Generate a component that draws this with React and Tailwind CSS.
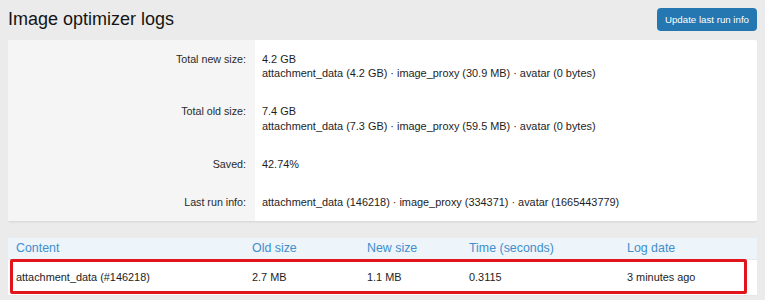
const stats = [
  {
    label: 'Total new size:',
    lines: ['4.2 GB', 'attachment_data (4.2 GB) · image_proxy (30.9 MB) · avatar (0 bytes)'],
  },
  {
    label: 'Total old size:',
    lines: ['7.4 GB', 'attachment_data (7.3 GB) · image_proxy (59.5 MB) · avatar (0 bytes)'],
  },
  { label: 'Saved:', lines: ['42.74%'] },
  {
    label: 'Last run info:',
    lines: ['attachment_data (146218) · image_proxy (334371) · avatar (1665443779)'],
  },
]

const cols = ['Content', 'Old size', 'New size', 'Time (seconds)', 'Log date']
const row = ['attachment_data (#146218)', '2.7 MB', '1.1 MB', '0.3115', '3 minutes ago']

const App = () => {
  return (
    <div className="w-[765px] h-[300px] overflow-hidden bg-[#ebebeb] font-['Liberation_Sans',Arial,sans-serif] text-[#1d1d1d]">
      {/* header */}
      <div className="flex items-start justify-between pl-[8px] pr-[8px] pt-[8px] h-[40px]">
        <h1 className="text-[18px] leading-[22px] text-[#141414]">Image optimizer logs</h1>
        <button className="h-[23px] w-[100px] rounded-[4px] bg-[#2577b1] text-white text-[9.7px] leading-[23px] text-center">
          Update last run info
        </button>
      </div>

      {/* stats panel */}
      <div className="mx-[8px] flex bg-white rounded-[2px] border-b border-[#dcdcdc] shadow-[0_1px_1px_rgba(0,0,0,0.04)]">
        <div className="w-[247px] bg-[#f5f5f5] flex flex-col">
          {stats.map((s) => (
            <div key={s.label} className="py-[11.75px] pr-[9px] text-right text-[10.7px] leading-[14.5px] text-[#2a2a2a]">
              <div>{s.label}</div>
              {s.lines.slice(1).map((l, i) => (
                <div key={i}>&nbsp;</div>
              ))}
            </div>
          ))}
        </div>
        <div className="flex-1 flex flex-col">
          {stats.map((s) => (
            <div key={s.label} className="py-[11.75px] pl-[7px] text-[10.9px] leading-[14.5px] text-[#1d1d1d]">
              {s.lines.map((l, i) => (
                <div key={i}>{l}</div>
              ))}
            </div>
          ))}
        </div>
      </div>

      {/* logs table */}
      <div className="relative mx-[8px] mt-[16px] bg-white rounded-t-[2px]">
        <div className="grid grid-cols-[236px_115px_102px_158px_1fr] pl-[8px] h-[22px] items-center bg-[#edf4fa] border-b border-[#e3ebf2] text-[12.4px] text-[#3f8fcc]">
          {cols.map((c) => (
            <div key={c}>{c}</div>
          ))}
        </div>
        <div className="grid grid-cols-[236px_115px_102px_158px_1fr] pl-[8px] h-[36px] items-center text-[10.9px] text-[#1d1d1d] border-b border-[#e6e6e6]">
          {row.map((c) => (
            <div key={c}>{c}</div>
          ))}
        </div>
        <div className="absolute left-[2px] top-[21px] w-[737px] h-[35px] border-[3px] border-[#e0161c] rounded-[2px]" />
      </div>
    </div>
  )
}

export default App
